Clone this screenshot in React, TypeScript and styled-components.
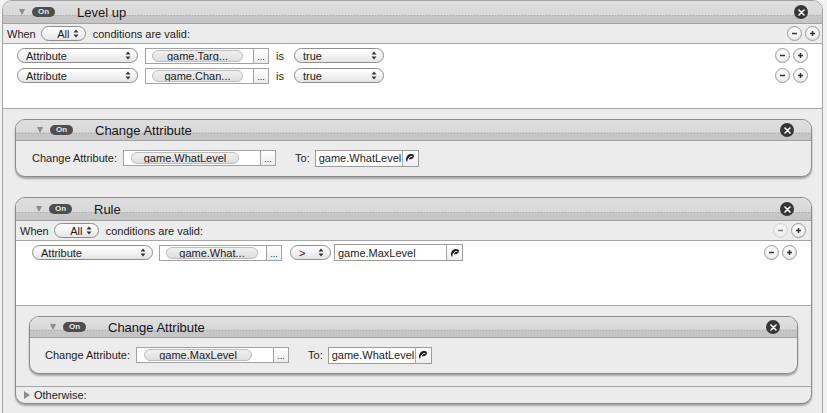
import React from 'react';
import styled, { createGlobalStyle } from 'styled-components';

const GlobalStyle = createGlobalStyle`
  html, body { margin: 0; padding: 0; background: #f2f2f2; }
  body { font-family: "Liberation Sans", Arial, sans-serif; font-size: 11px; color: #1c1c1c; }
  * { box-sizing: border-box; }
`;

const Page = styled.div`
  width: 827px;
  height: 413px;
  overflow: hidden;
  padding: 0 4px 0 2px;
`;

const Block = styled.div<{ $root?: boolean }>`
  background: #ececec;
  border: 1px solid ${p => (p.$root ? '#a4a4a4' : '#8a8a8a')};
  border-radius: 10px;
  overflow: hidden;
  box-shadow: ${p => (p.$root ? 'none' : '0 2px 2px rgba(0,0,0,0.3)')};
  ${p => (p.$root ? 'height: 440px;' : '')}
`;

const Header = styled.div<{ $pl: number; $pr: number; $h: number }>`
  height: ${p => p.$h}px;
  display: flex;
  align-items: center;
  padding: 0 ${p => p.$pr}px 0 ${p => p.$pl}px;
  background-color: #d9d9d9;
  background-image:
    repeating-linear-gradient(to right, #a9a9a9 0 1px, transparent 1px 3px),
    linear-gradient(to bottom, #dfdfdf 0%, #d8d8d8 62%, #c7c7c7 63%, #c4c4c4 100%);
  background-size: 100% 1px, 100% 100%;
  background-position: 0 ${p => Math.round(p.$h * 0.62)}px, 0 0;
  background-repeat: no-repeat;
  border-bottom: 1px solid #a2a2a2;
`;

const Disclosure = styled.span<{ $open?: boolean }>`
  width: 0;
  height: 0;
  flex: none;
  ${p =>
    p.$open
      ? `border-left: 3.5px solid transparent; border-right: 3.5px solid transparent; border-top: 6px solid #8c8c8c;`
      : `border-top: 4px solid transparent; border-bottom: 4px solid transparent; border-left: 6px solid #8c8c8c;`}
`;

const OnPill = styled.span`
  margin-left: 7px;
  width: 23px;
  height: 10px;
  border-radius: 5px;
  background: #4e4e4e;
  color: #e6e6e6;
  font-size: 8px;
  font-weight: bold;
  line-height: 10px;
  text-align: center;
  flex: none;
`;

const Title = styled.span`
  margin-left: 22px;
  font-size: 13px;
  color: #161616;
`;

const CloseBtn = styled.span`
  margin-left: auto;
  width: 14px;
  height: 14px;
  border-radius: 50%;
  background: #363636;
  display: flex;
  align-items: center;
  justify-content: center;
  flex: none;
`;

const WhenRow = styled.div<{ $pl: number; $pr: number }>`
  height: 20px;
  display: flex;
  align-items: center;
  padding: 0 ${p => p.$pr}px 0 ${p => p.$pl}px;
  background: #ececec;
  border-bottom: 1px solid #a6a6a6;
`;

const Label = styled.span<{ $ml?: number }>`
  margin-left: ${p => p.$ml ?? 0}px;
  white-space: nowrap;
`;

const Popup = styled.span<{ $w: number; $ml?: number }>`
  margin-left: ${p => p.$ml ?? 0}px;
  width: ${p => p.$w}px;
  height: 15px;
  border: 1px solid #8e8e8e;
  border-radius: 8px;
  background: linear-gradient(to bottom, #ffffff 0%, #f3f3f3 50%, #e4e4e4 100%);
  display: flex;
  align-items: center;
  padding: 0 6px 0 8px;
  flex: none;
  font-size: 11px;
`;

const PopupText = styled.span<{ $center?: boolean }>`
  flex: 1;
  text-align: ${p => (p.$center ? 'center' : 'left')};
  padding-left: ${p => (p.$center ? '4px' : '0')};
`;

const RoundButtons = styled.span`
  margin-left: auto;
  display: flex;
  gap: 3px;
  flex: none;
`;

const RoundBtn = styled.span<{ $dim?: boolean }>`
  width: 15px;
  height: 15px;
  border-radius: 50%;
  border: 1px solid ${p => (p.$dim ? '#c4c4c4' : '#9c9c9c')};
  background: radial-gradient(circle at 50% 35%, #ffffff 0%, #f2f2f2 55%, #d8d8d8 100%);
  display: flex;
  align-items: center;
  justify-content: center;
  opacity: ${p => (p.$dim ? 0.6 : 1)};
`;

const Conditions = styled.div<{ $h: number }>`
  background: #ffffff;
  height: ${p => p.$h}px;
  padding-top: 4px;
  border-bottom: 1px solid #a6a6a6;
  display: flex;
  flex-direction: column;
  gap: 5px;
`;

const CondRow = styled.div<{ $pl: number }>`
  height: 15px;
  display: flex;
  align-items: center;
  padding: 0 14px 0 ${p => p.$pl}px;
`;

const AttrBox = styled.span<{ $w: number; $ml: number; $pillW: number; $pillMl: number }>`
  margin-left: ${p => p.$ml}px;
  width: ${p => p.$w}px;
  height: 16px;
  border: 1px solid #a2a2a2;
  background: #fff;
  display: flex;
  align-items: center;
  flex: none;
  & > span:first-child {
    margin-left: ${p => p.$pillMl}px;
    width: ${p => p.$pillW}px;
  }
`;

const VarPill = styled.span`
  height: 12px;
  border-radius: 6px;
  border: 1px solid #bdbdbd;
  background: linear-gradient(to bottom, #f0f0f0, #dedede);
  text-align: center;
  line-height: 10px;
  font-size: 11px;
  white-space: nowrap;
  overflow: hidden;
`;

const DotsCell = styled.span`
  margin-left: auto;
  width: 15px;
  height: 100%;
  border-left: 1px solid #a2a2a2;
  background: linear-gradient(to bottom, #ffffff, #ececec);
  font-size: 9px;
  text-align: center;
  line-height: 17px;
  flex: none;
`;

const ExprField = styled.span<{ $w: number; $ml: number }>`
  margin-left: ${p => p.$ml}px;
  width: ${p => p.$w}px;
  height: 17px;
  border: 1px solid #9c9c9c;
  background: #fff;
  display: flex;
  align-items: center;
  flex: none;
`;

const ExprText = styled.span`
  flex: 1;
  padding-left: 3px;
  white-space: nowrap;
  overflow: hidden;
  font-size: 11px;
`;

const ExprBtn = styled.span`
  width: 16px;
  height: 100%;
  border-left: 1px solid #a8a8a8;
  background: linear-gradient(to bottom, #ffffff, #eeeeee);
  display: flex;
  align-items: center;
  justify-content: center;
  flex: none;
`;

const Actions = styled.div<{ $pad: string }>`
  padding: ${p => p.$pad};
  display: flex;
  flex-direction: column;
  gap: 20px;
`;

const ChangeBody = styled.div<{ $pl: number }>`
  height: 35px;
  display: flex;
  align-items: center;
  padding-left: ${p => p.$pl}px;
  padding-bottom: 1px;
`;

const OtherwiseRow = styled.div`
  height: 17px;
  border-top: 1px solid #a6a6a6;
  display: flex;
  align-items: center;
  padding-left: 8px;
  gap: 4px;
`;

const Arrows = () => (
  <svg width="6" height="9" viewBox="0 0 6 9">
    <polygon points="0.5,3.5 3,0.5 5.5,3.5" fill="#333" />
    <polygon points="0.5,5.5 3,8.5 5.5,5.5" fill="#333" />
  </svg>
);

const XIcon = () => (
  <svg width="7" height="7" viewBox="0 0 7 7">
    <path d="M1 1 L6 6 M6 1 L1 6" stroke="#fff" strokeWidth="1.6" strokeLinecap="round" />
  </svg>
);

const Minus = () => (
  <svg width="7" height="7" viewBox="0 0 7 7">
    <path d="M1 3.5 H6" stroke="#333" strokeWidth="1.5" />
  </svg>
);

const Plus = () => (
  <svg width="7" height="7" viewBox="0 0 7 7">
    <path d="M1 3.5 H6 M3.5 1 V6" stroke="#333" strokeWidth="1.5" />
  </svg>
);

const ExprIcon = () => (
  <svg width="10" height="10" viewBox="0 0 10 10">
    <path d="M2 9 C0 7 1 2 5 1 C8 0.5 10 2 8.5 4.5 C7 6.5 4 7 3 5.5" fill="#222" />
    <path d="M3.2 6.5 C4 4 6 3 7.2 3.6" stroke="#fff" strokeWidth="1" fill="none" />
  </svg>
);

const PlusMinus = ({ dimMinus }: { dimMinus?: boolean }) => (
  <RoundButtons>
    <RoundBtn $dim={dimMinus}>
      <Minus />
    </RoundBtn>
    <RoundBtn>
      <Plus />
    </RoundBtn>
  </RoundButtons>
);

const BlockHead = ({ title, pl, pr, h = 22 }: { title: string; pl: number; pr: number; h?: number }) => (
  <Header $pl={pl} $pr={pr} $h={h}>
    <Disclosure $open />
    <OnPill>On</OnPill>
    <Title>{title}</Title>
    <CloseBtn>
      <XIcon />
    </CloseBtn>
  </Header>
);

const When = ({ pl, pr, dimMinus }: { pl: number; pr: number; dimMinus?: boolean }) => (
  <WhenRow $pl={pl} $pr={pr}>
    <Label>When</Label>
    <Popup $w={45} $ml={5}>
      <PopupText $center>All</PopupText>
      <Arrows />
    </Popup>
    <Label $ml={7}>conditions are valid:</Label>
    <PlusMinus dimMinus={dimMinus} />
  </WhenRow>
);

const ChangeAttribute = ({ target, value, pl }: { target: string; value: string; pl: number }) => (
  <Block>
    <BlockHead title="Change Attribute" pl={pl + 5} pr={17} h={21} />
    <ChangeBody $pl={pl}>
      <Label>Change Attribute:</Label>
      <AttrBox $w={153} $ml={6} $pillW={108} $pillMl={7}>
        <VarPill>{target}</VarPill>
        <DotsCell>...</DotsCell>
      </AttrBox>
      <Label $ml={19}>To:</Label>
      <ExprField $w={104} $ml={5}>
        <ExprText>{value}</ExprText>
        <ExprBtn>
          <ExprIcon />
        </ExprBtn>
      </ExprField>
    </ChangeBody>
  </Block>
);

const BoolCondition = ({ name }: { name: string }) => (
  <CondRow $pl={14}>
    <Popup $w={121}>
      <PopupText>Attribute</PopupText>
      <Arrows />
    </Popup>
    <AttrBox $w={124} $ml={7} $pillW={91} $pillMl={6}>
      <VarPill>{name}</VarPill>
      <DotsCell>...</DotsCell>
    </AttrBox>
    <Label $ml={7}>is</Label>
    <Popup $w={90} $ml={10}>
      <PopupText>true</PopupText>
      <Arrows />
    </Popup>
    <PlusMinus />
  </CondRow>
);

export default function App() {
  return (
    <Page>
      <GlobalStyle />
      <Block $root>
        <BlockHead title="Level up" pl={16} pr={14} h={23} />
        <When pl={4} pr={2} />
        <Conditions $h={65}>
          <BoolCondition name="game.Targ..." />
          <BoolCondition name="game.Chan..." />
        </Conditions>
        <Actions $pad="10px 10px 0 12px">
          <ChangeAttribute target="game.WhatLevel" value="game.WhatLevel-1" pl={16} />
          <Block>
            <BlockHead title="Rule" pl={20} pr={17} h={23} />
            <When pl={4} pr={5} dimMinus />
            <Conditions $h={65}>
              <CondRow $pl={16}>
                <Popup $w={121}>
                  <PopupText>Attribute</PopupText>
                  <Arrows />
                </Popup>
                <AttrBox $w={123} $ml={6} $pillW={92} $pillMl={6}>
                  <VarPill>game.What...</VarPill>
                  <DotsCell>...</DotsCell>
                </AttrBox>
                <Popup $w={41} $ml={8}>
                  <PopupText>&gt;</PopupText>
                  <Arrows />
                </Popup>
                <ExprField $w={129} $ml={3}>
                  <ExprText>game.MaxLevel</ExprText>
                  <ExprBtn>
                    <ExprIcon />
                  </ExprBtn>
                </ExprField>
                <PlusMinus />
              </CondRow>
            </Conditions>
            <Actions $pad="10px 13px 12px 13px">
              <ChangeAttribute target="game.MaxLevel" value="game.WhatLevel" pl={15} />
            </Actions>
            <OtherwiseRow>
              <Disclosure />
              <Label>Otherwise:</Label>
            </OtherwiseRow>
          </Block>
        </Actions>
      </Block>
    </Page>
  );
}
